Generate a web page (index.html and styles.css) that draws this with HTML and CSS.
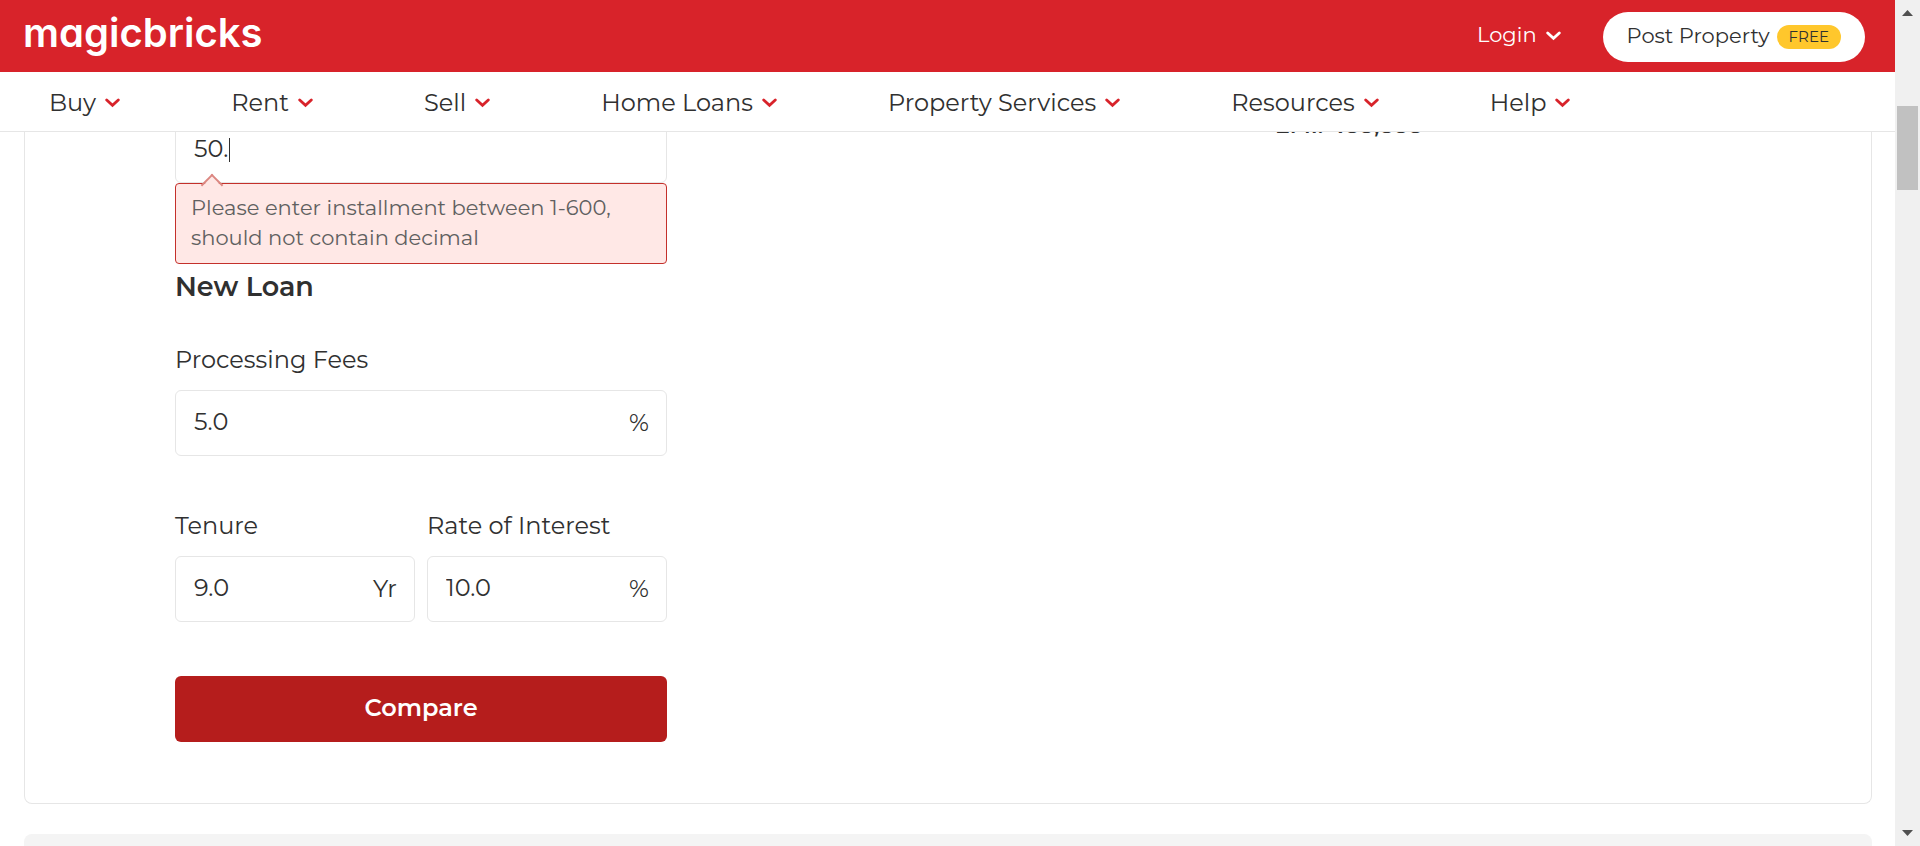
FILE: index.html
```html
<!DOCTYPE html>
<html lang="en">
<head>
<meta charset="utf-8">
<meta name="viewport" content="width=device-width, initial-scale=1">
<title>Magicbricks - Loan Comparison</title>
<link rel="stylesheet" href="styles.css">
</head>
<body>
<svg class="sprite" aria-hidden="true"><symbol id="chevron" viewBox="0 0 15 10"><path d="M1.7 2 7.5 7.3 13.3 2" fill="none" stroke="currentColor" stroke-width="2.8" stroke-linecap="round"/></symbol></svg>
<div class="page">
  <header class="site-header">
    <div class="topbar">
      <a class="logo" href="#">magicbricks</a>
      <div class="account">
        <button class="login" type="button"><span class="label">Login</span> <svg class="chevron"><use href="#chevron"/></svg></button>
        <a class="post" href="#"><span class="label">Post Property</span> <span class="badge">FREE</span></a>
      </div>
    </div>
    <nav class="menu" aria-label="Main">
      <a href="#">Buy <svg class="chevron"><use href="#chevron"/></svg></a>
      <a href="#">Rent <svg class="chevron"><use href="#chevron"/></svg></a>
      <a href="#">Sell <svg class="chevron"><use href="#chevron"/></svg></a>
      <a href="#">Home Loans <svg class="chevron"><use href="#chevron"/></svg></a>
      <a href="#">Property Services <svg class="chevron"><use href="#chevron"/></svg></a>
      <a href="#">Resources <svg class="chevron"><use href="#chevron"/></svg></a>
      <a href="#">Help <svg class="chevron"><use href="#chevron"/></svg></a>
    </nav>
  </header>
  <main class="content">
    <section class="panel">
      <form class="loan-form">
        <div class="box">
          <input id="paid" type="text" value="50." aria-label="Installments paid" aria-describedby="paid-error">
          <span class="caret"></span>
        </div>
        <p class="error" id="paid-error" role="alert">Please enter installment between 1-600, should not contain decimal</p>
        <h2 class="heading">New Loan</h2>
        <div class="field">
          <label for="fees">Processing Fees</label>
          <div class="box"><input id="fees" type="text" value="5.0"><span class="unit">%</span></div>
        </div>
        <div class="row">
          <div class="field">
            <label for="tenure">Tenure</label>
            <div class="box"><input id="tenure" type="text" value="9.0"><span class="unit">Yr</span></div>
          </div>
          <div class="field">
            <label for="rate">Rate of Interest</label>
            <div class="box"><input id="rate" type="text" value="10.0"><span class="unit">%</span></div>
          </div>
        </div>
        <button class="compare" type="submit">Compare</button>
      </form>
      <p class="emi">EMI: ₹88,888</p>
    </section>
    <section class="next-panel"></section>
  </main>
</div>
<div class="scrollbar" aria-hidden="true">
  <svg class="arrow" viewBox="0 0 11 6"><path d="M0 6 5.5 0 11 6z"/></svg>
  <div class="track"><div class="thumb"></div></div>
  <svg class="arrow" viewBox="0 0 11 6"><path d="M0 0 5.5 6 11 0z"/></svg>
</div>
</body>
</html>
```
FILE: styles.css
```css
* { box-sizing: border-box; }

body {
  margin: 0;
  display: flex;
  height: 100vh;
  overflow: hidden;
  background: #fff;
  color: #303030;
  font-family: Montserrat, Inter, sans-serif;
  font-size: 24px;
}

a { color: inherit; text-decoration: none; }
button, input { font: inherit; color: inherit; }

.sprite { display: none; }

.page { flex: 1; min-width: 0; overflow: hidden; }

.site-header {
  position: relative;
  z-index: 1;
  background: #fff;
  border-bottom: 1px solid #e6e6e6;
}

.topbar {
  display: flex;
  align-items: center;
  justify-content: space-between;
  height: 72px;
  padding: 2px 30px 0 23px;
  background: #d8232a;
  color: #fff;
}

.logo {
  padding-bottom: 8px;
  font-family: Inter, sans-serif;
  font-size: 40px;
  font-weight: 600;
  line-height: 60px;
  font-feature-settings: "cv11";
}

.account { display: flex; align-items: center; gap: 42px; }

.chevron { width: 15px; height: 10px; flex: none; }

.login {
  display: flex;
  align-items: center;
  gap: 9px;
  padding: 0 0 2px;
  border: 0;
  background: none;
  font-size: 21px;
}

.label { padding-bottom: 3px; }

.post {
  display: flex;
  align-items: center;
  gap: 7px;
  height: 50px;
  padding: 0 24px;
  border-radius: 25px;
  background: #fff;
  color: #303030;
  font-size: 21px;
}

.badge {
  padding: 0 12px;
  border-radius: 12px;
  background: #ffc72c;
  font-size: 15px;
  line-height: 24px;
}

.menu {
  display: flex;
  gap: 111px;
  height: 59px;
  padding: 2px 49px 0;
}

.menu a {
  display: flex;
  align-items: center;
  gap: 9px;
  white-space: nowrap;
}

.menu .chevron { color: #d8232a; }

.content { padding: 0 23px 0 24px; margin-top: -39px; }

.panel {
  display: grid;
  grid-template-columns: 492px 1fr;
  column-gap: 608px;
  padding: 24px 150px 61px;
  border: 1px solid #e6e6e6;
  border-top: 0;
  border-radius: 0 0 8px 8px;
}

.loan-form { display: flex; flex-direction: column; }

.box {
  display: flex;
  align-items: center;
  height: 66px;
  padding: 0 17px 0 18px;
  border: 1px solid #e6e6e6;
  border-radius: 6px;
}

.box input {
  flex: 1;
  width: 0;
  min-width: 0;
  padding: 0 0 4px;
  border: 0;
  outline: 0;
  background: none;
}

.box #paid { flex: none; width: 35px; }
.caret { width: 1px; height: 24px; background: #303030; }

.unit { padding-bottom: 2px; }

.error {
  position: relative;
  margin: 0;
  padding: 9px 15px 10px;
  border: 1px solid #c4302b;
  border-radius: 4px;
  background: #ffe8e6;
  color: #606060;
  font-size: 21px;
  line-height: 30px;
}

.error::before {
  content: "";
  position: absolute;
  top: -7px;
  left: 28px;
  width: 14px;
  height: 14px;
  border: solid #dc8781;
  border-width: 2px 0 0 2px;
  background: linear-gradient(135deg, #ffe8e6 50%, transparent 50%);
  transform: rotate(45deg);
}

.heading {
  margin: 6px 0 40px;
  font-size: 27px;
  font-weight: 600;
  line-height: 34px;
}

.field { display: flex; flex-direction: column; gap: 15px; margin-bottom: 54px; }
.field label { line-height: 31px; }

.row { display: grid; grid-template-columns: 1fr 1fr; gap: 12px; }

.compare {
  height: 66px;
  padding: 0 0 4px;
  border: 0;
  border-radius: 6px;
  background: #b51d1c;
  color: #fff;
  font-weight: 600;
}

.emi { margin: 0; font-size: 22px; font-weight: 600; line-height: 18px; white-space: nowrap; }

.next-panel { height: 100px; margin-top: 30px; border-radius: 8px; background: #f4f4f4; }

.scrollbar {
  display: flex;
  flex-direction: column;
  align-items: center;
  flex: none;
  width: 25px;
  padding: 10px 2px;
  background: #f0f0f0;
}

.arrow { width: 11px; height: 6px; fill: #505050; }
.track { flex: 1; align-self: stretch; padding-top: 90px; }
.thumb { height: 84px; background: #c1c1c1; }
```
